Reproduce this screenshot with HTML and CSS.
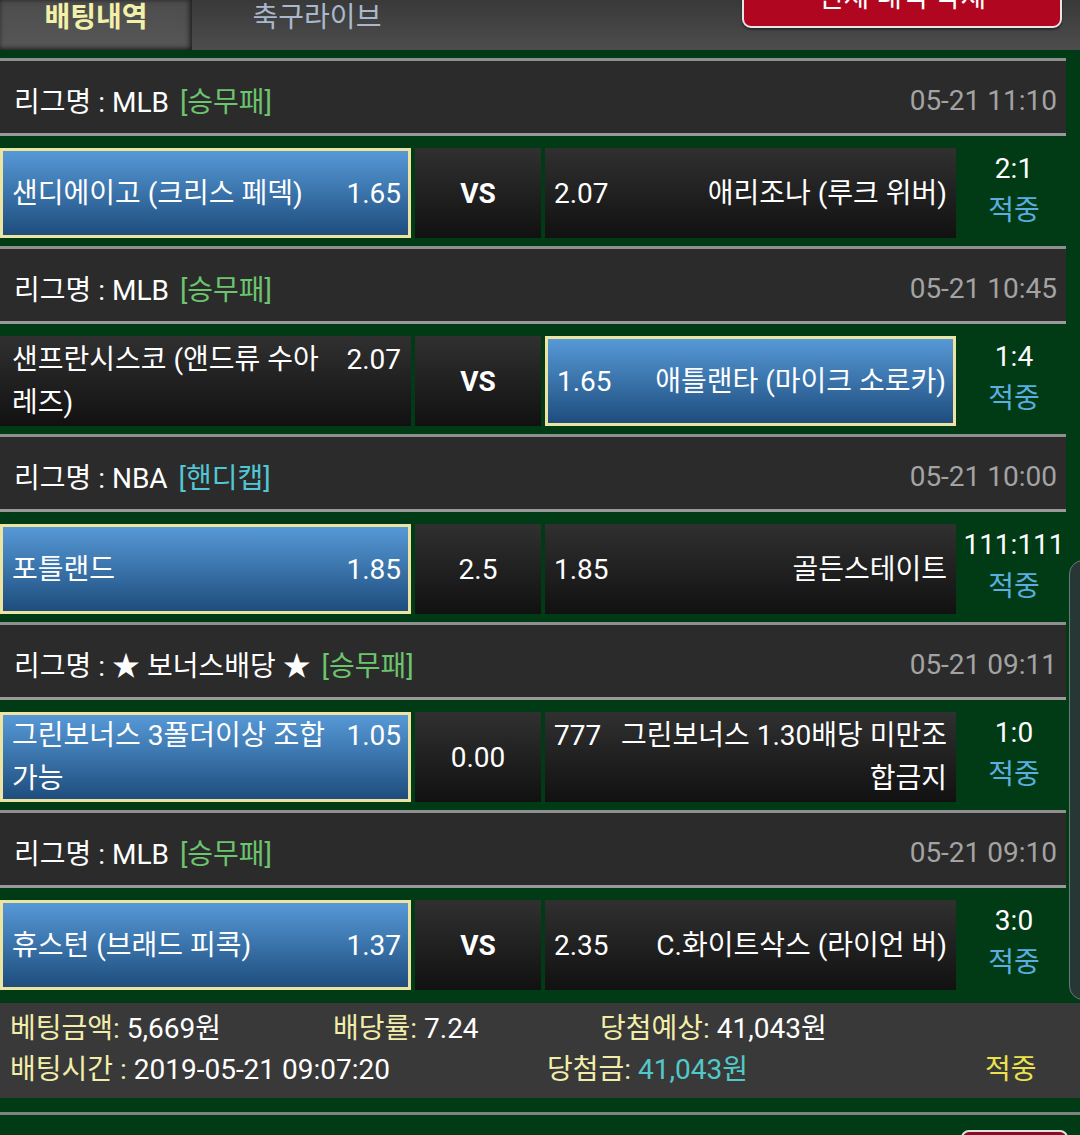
FILE: index.html
```html
<!DOCTYPE html>
<html lang="ko">
<head>
<meta charset="utf-8">
<title>배팅내역</title>
<link rel="stylesheet" href="styles.css">
</head>
<body>
<div class="page">
  <header class="tabs">
    <div class="tab active">배팅내역</div>
    <div class="tab">축구라이브</div>
    <button class="del-all">전체 내역 삭제</button>
  </header>

  <main class="bets">
    <section class="bet-item">
      <div class="league"><span>리그명 : MLB <span class="type win">[승무패]</span></span><span class="time">05-21 11:10</span></div>
      <div class="match">
        <div class="cell home picked"><span class="name">샌디에이고 (크리스 페덱)</span><span class="odds">1.65</span></div>
        <div class="cell mid vs">VS</div>
        <div class="cell away"><span class="odds">2.07</span><span class="name">애리조나 (루크 위버)</span></div>
        <div class="result"><span class="score">2:1</span><span class="status">적중</span></div>
      </div>
    </section>

    <section class="bet-item">
      <div class="league"><span>리그명 : MLB <span class="type win">[승무패]</span></span><span class="time">05-21 10:45</span></div>
      <div class="match">
        <div class="cell home"><span class="name">샌프란시스코 (앤드류 수아 레즈)</span><span class="odds">2.07</span></div>
        <div class="cell mid vs">VS</div>
        <div class="cell away picked"><span class="odds">1.65</span><span class="name">애틀랜타 (마이크 소로카)</span></div>
        <div class="result"><span class="score">1:4</span><span class="status">적중</span></div>
      </div>
    </section>

    <section class="bet-item">
      <div class="league"><span>리그명 : NBA <span class="type hc">[핸디캡]</span></span><span class="time">05-21 10:00</span></div>
      <div class="match">
        <div class="cell home picked"><span class="name">포틀랜드</span><span class="odds">1.85</span></div>
        <div class="cell mid">2.5</div>
        <div class="cell away"><span class="odds">1.85</span><span class="name">골든스테이트</span></div>
        <div class="result"><span class="score">111:111</span><span class="status">적중</span></div>
      </div>
    </section>

    <section class="bet-item">
      <div class="league"><span>리그명 : ★ 보너스배당 ★ <span class="type win">[승무패]</span></span><span class="time">05-21 09:11</span></div>
      <div class="match">
        <div class="cell home picked"><span class="name">그린보너스 3폴더이상 조합 가능</span><span class="odds">1.05</span></div>
        <div class="cell mid">0.00</div>
        <div class="cell away"><span class="odds">777</span><span class="name">그린보너스 1.30배당 미만조 합금지</span></div>
        <div class="result"><span class="score">1:0</span><span class="status">적중</span></div>
      </div>
    </section>

    <section class="bet-item">
      <div class="league"><span>리그명 : MLB <span class="type win">[승무패]</span></span><span class="time">05-21 09:10</span></div>
      <div class="match">
        <div class="cell home picked"><span class="name">휴스턴 (브래드 피콕)</span><span class="odds">1.37</span></div>
        <div class="cell mid vs">VS</div>
        <div class="cell away"><span class="odds">2.35</span><span class="name">C.화이트삭스 (라이언 버)</span></div>
        <div class="result"><span class="score">3:0</span><span class="status">적중</span></div>
      </div>
    </section>
  </main>

  <section class="summary">
    <div class="sum-row">
      <span class="f1"><span class="lbl">베팅금액:</span> 5,669원</span>
      <span class="f2"><span class="lbl">배당률:</span> 7.24</span>
      <span class="f3"><span class="lbl">당첨예상:</span> 41,043원</span>
    </div>
    <div class="sum-row">
      <span class="f1b"><span class="lbl">배팅시간 :</span> 2019-05-21 09:07:20</span>
      <span class="f4"><span class="lbl">당첨금:</span> <span class="won">41,043원</span></span>
      <span class="f5">적중</span>
    </div>
  </section>

  <div class="next">
    <button class="del-one"></button>
  </div>

  <div class="side-handle"></div>
</div>
</body>
</html>
```

FILE: styles.css
```css
* { box-sizing: border-box; }
html, body {
  margin: 0;
  padding: 0;
  background: #013b15;
  overflow: hidden;
}
body {
  font-family: "Roboto", "Noto Sans CJK KR", sans-serif;
  font-size: 28px;
  color: #ffffff;
  width: 1080px;
  height: 1135px;
}
.page {
  position: relative;
  width: 1080px;
  height: 1135px;
  overflow: hidden;
}

/* tabs */
.tabs {
  display: flex;
  align-items: flex-start;
  height: 50px;
  background: linear-gradient(#393939, #4d4d4d);
}
.tab {
  height: 50px;
  line-height: 36px;
  text-align: center;
  color: #a9b8cc;
  width: 250px;
}
.tab.active {
  width: 192px;
  color: #f3f1a9;
  font-weight: bold;
  background: linear-gradient(#4c4c4c, #575757);
  box-shadow: inset -3px 0 5px rgba(0,0,0,0.45), inset 0 -2px 4px rgba(0,0,0,0.4);
}
.del-all {
  margin-left: auto;
  margin-right: 18px;
  margin-top: -34px;
  width: 320px;
  height: 62px;
  background: #b0061f;
  border: 2px solid #e6e6e6;
  border-radius: 9px;
  color: #ffffff;
  font-family: inherit;
  font-size: 28px;
  padding: 0;
  line-height: 60px;
  box-shadow: 0 2px 2px rgba(0,0,0,0.4);
}

/* bets */
.bets {
  padding-top: 8px;
}
.bet-item {
  width: 1066px;
  padding-bottom: 8px;
}
.league {
  height: 78px;
  background: #2b2b2b;
  border-top: 3px solid #8f8f8f;
  border-bottom: 3px solid #9a9a9a;
  display: flex;
  align-items: center;
  justify-content: space-between;
  padding: 6px 9px 0 14px;
}
.type.win { color: #6cc46e; margin-left: 4px; }
.type.hc { color: #52c6d4; margin-left: 4px; }
.time { color: #a3a3a3; }

.match {
  margin-top: 12px;
  height: 90px;
  display: grid;
  grid-template-columns: 411px 126px 411px 1fr;
  grid-template-rows: 90px;
  column-gap: 4px;
}
.cell {
  background: linear-gradient(#303030, #111111);
  display: grid;
  align-content: center;
  align-items: start;
  column-gap: 18px;
  line-height: 43px;
  padding: 0 10px 0 12px;
  overflow: hidden;
}
.cell.home { grid-template-columns: 1fr auto; }
.cell.away { grid-template-columns: auto 1fr; padding: 0 9px 0 9px; }
.cell.away .name { text-align: right; }
.cell.picked {
  background: linear-gradient(#5699d7, #1e4d7d);
  border: 3px solid #ede4a2;
  padding: 0 7px 0 9px;
}
.cell.away.picked { padding: 0 7px 0 9px; }
.cell.mid {
  display: flex;
  align-items: center;
  justify-content: center;
  padding: 0;
}
.cell.vs { font-weight: bold; }

.result {
  display: flex;
  flex-direction: column;
  align-items: center;
  justify-content: center;
  line-height: 42px;
  padding-bottom: 6px;
  padding-left: 2px;
}
.status { color: #5aaee0; }

/* summary */
.summary {
  margin-top: 5px;
  height: 95px;
  background: #393939;
  padding: 5px 0 0 10px;
}
.sum-row {
  height: 41px;
  line-height: 41px;
  display: flex;
  white-space: nowrap;
}
.lbl { color: #f2eeaa; }
.f1 { width: 323px; flex: none; }
.f2 { width: 267px; flex: none; }
.f1b { width: 537px; flex: none; }
.f4 { width: 438px; flex: none; }
.f5 { color: #ebe24e; }
.won { color: #52c9c9; }

.next {
  margin-top: 14px;
  border-top: 3px solid #7f837f;
  height: 40px;
  display: flex;
  justify-content: flex-end;
}
.del-one {
  margin-top: 15px;
  margin-right: 12px;
  width: 107px;
  height: 40px;
  background: #8a0c24;
  border: 2px solid #e2e2e2;
  border-radius: 8px;
  padding: 0;
}

.side-handle {
  position: absolute;
  left: 1069px;
  top: 560px;
  width: 40px;
  height: 440px;
  background: #263735;
  border: 1.5px solid #6a7877;
  border-radius: 14px;
}
```
